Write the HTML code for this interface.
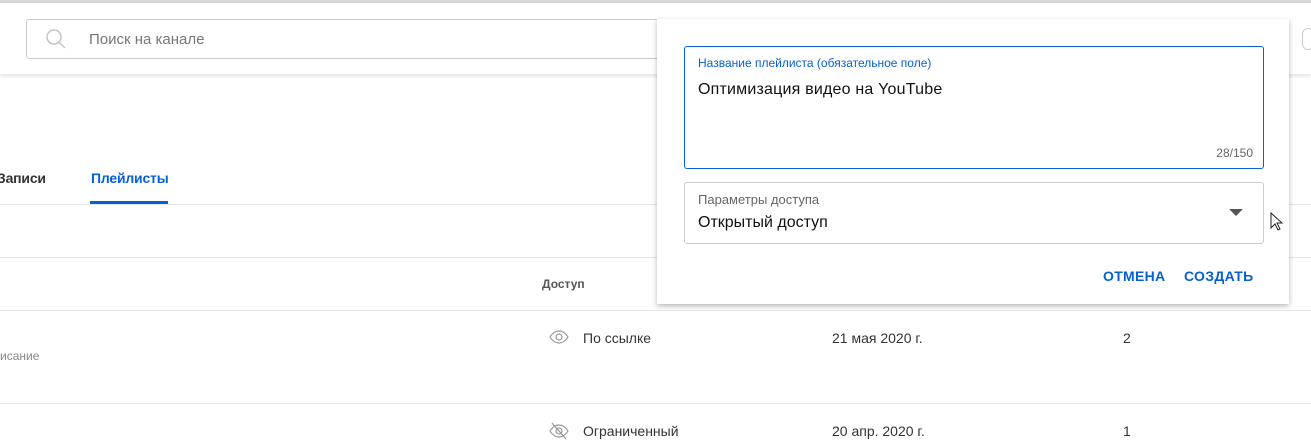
<!DOCTYPE html>
<html><head><meta charset="utf-8"><style>
*{box-sizing:border-box;margin:0;padding:0}
body{width:1311px;height:443px;overflow:hidden;background:#fff;font-family:"Liberation Sans",sans-serif;position:relative;color:#0d0d0d}
.a{position:absolute}
.hl{position:absolute;left:0;right:0;height:1px;background:#e5e5e5}
</style></head><body>
<div class="a" style="left:0;top:0;width:1311px;height:3px;background:#d9d9d9"></div>
<div class="a" style="left:0;top:3px;width:1311px;height:71px;background:#fff;box-shadow:0 2px 4px rgba(0,0,0,.12)"></div>
<div class="a" style="left:26px;top:19px;width:700px;height:40px;border:1px solid #ccc;border-radius:3px"></div>
<svg class="a" style="left:45px;top:28px" width="22" height="22" viewBox="0 0 22 22"><circle cx="9" cy="9" r="7" fill="none" stroke="#c4c4c4" stroke-width="1.5"/><line x1="14" y1="14" x2="20" y2="20" stroke="#c4c4c4" stroke-width="1.5"/></svg>
<div class="a" style="left:89px;top:31px;font-size:15px;color:#777">Поиск на канале</div>
<div class="a" style="left:1302px;top:28px;width:12px;height:22px;border:1px solid #ccc;border-radius:10px"></div>

<div class="a" style="left:-3px;top:170px;font-size:14px;font-weight:bold;color:#333;letter-spacing:-.2px">Записи</div>
<div class="a" style="left:91px;top:170px;font-size:14px;font-weight:bold;color:#065fd4;letter-spacing:-.2px">Плейлисты</div>
<div class="a" style="left:90px;top:201px;width:78px;height:3px;background:#065fd4"></div>
<div class="hl" style="top:204px"></div>
<div class="hl" style="top:257px"></div>
<div class="a" style="left:542px;top:277px;font-size:12px;font-weight:bold;color:#555">Доступ</div>
<div class="hl" style="top:310px"></div>
<div class="a" style="left:0;top:349px;font-size:12px;color:#888">исание</div>
<svg class="a" style="left:549px;top:329px" width="20" height="16" viewBox="0 0 20 16"><path d="M1 8C4 3 8 2 10 2s6 1 9 6c-3 5-7 6-9 6S4 13 1 8z" fill="none" stroke="#999" stroke-width="1.2"/><circle cx="10" cy="8" r="3" fill="none" stroke="#999" stroke-width="1.2"/></svg>
<div class="a" style="left:583px;top:330px;font-size:14px;color:#333">По ссылке</div>
<div class="a" style="left:832px;top:330px;font-size:14px;color:#333">21 мая 2020 г.</div>
<div class="a" style="left:1123px;top:330px;font-size:14px;color:#333">2</div>
<div class="hl" style="top:403px"></div>
<svg class="a" style="left:549px;top:422px" width="20" height="18" viewBox="0 0 20 18"><path d="M1 9C4 4 8 3 10 3s6 1 9 6c-3 5-7 6-9 6S4 14 1 9z" fill="none" stroke="#999" stroke-width="1.2"/><circle cx="10" cy="9" r="3" fill="none" stroke="#999" stroke-width="1.2"/><line x1="3" y1="1" x2="17" y2="17" stroke="#999" stroke-width="1.3"/></svg>
<div class="a" style="left:583px;top:423px;font-size:14px;color:#333">Ограниченный</div>
<div class="a" style="left:832px;top:423px;font-size:14px;color:#333">20 апр. 2020 г.</div>
<div class="a" style="left:1123px;top:423px;font-size:14px;color:#333">1</div>

<div class="a" style="left:657px;top:19px;width:632px;height:285px;background:#fff;box-shadow:0 2px 5px rgba(0,0,0,.28)">
  <div class="a" style="left:27px;top:27px;width:580px;height:123px;border:1px solid #065fd4;border-radius:3px">
    <div class="a" style="left:13px;top:9px;font-size:12px;color:#065fd4">Название плейлиста (обязательное поле)</div>
    <div class="a" style="left:13px;top:34px;font-size:16px;color:#111;letter-spacing:.2px">Оптимизация видео на YouTube</div>
    <div class="a" style="right:10px;top:99px;font-size:12px;color:#666">28/150</div>
  </div>
  <div class="a" style="left:27px;top:163px;width:580px;height:62px;border:1px solid #ccc;border-radius:3px">
    <div class="a" style="left:13px;top:9px;font-size:13px;color:#666">Параметры доступа</div>
    <div class="a" style="left:13px;top:31px;font-size:16px;color:#111">Открытый доступ</div>
    <div class="a" style="left:544px;top:26px;width:0;height:0;border-left:7px solid transparent;border-right:7px solid transparent;border-top:7px solid #555"></div>
  </div>
  <div class="a" style="left:446px;top:249px;font-size:14px;font-weight:bold;color:#065fd4;letter-spacing:.3px">ОТМЕНА</div>
  <div class="a" style="left:527px;top:249px;font-size:14px;font-weight:bold;color:#065fd4;letter-spacing:.3px">СОЗДАТЬ</div>
</div>
<svg class="a" style="left:1270px;top:212px" width="14" height="20" viewBox="0 0 14 20"><path d="M1 1v15l4-4 3 6 2-1-3-6h5z" fill="#fff" stroke="#222" stroke-width="1"/></svg>
</body></html>
